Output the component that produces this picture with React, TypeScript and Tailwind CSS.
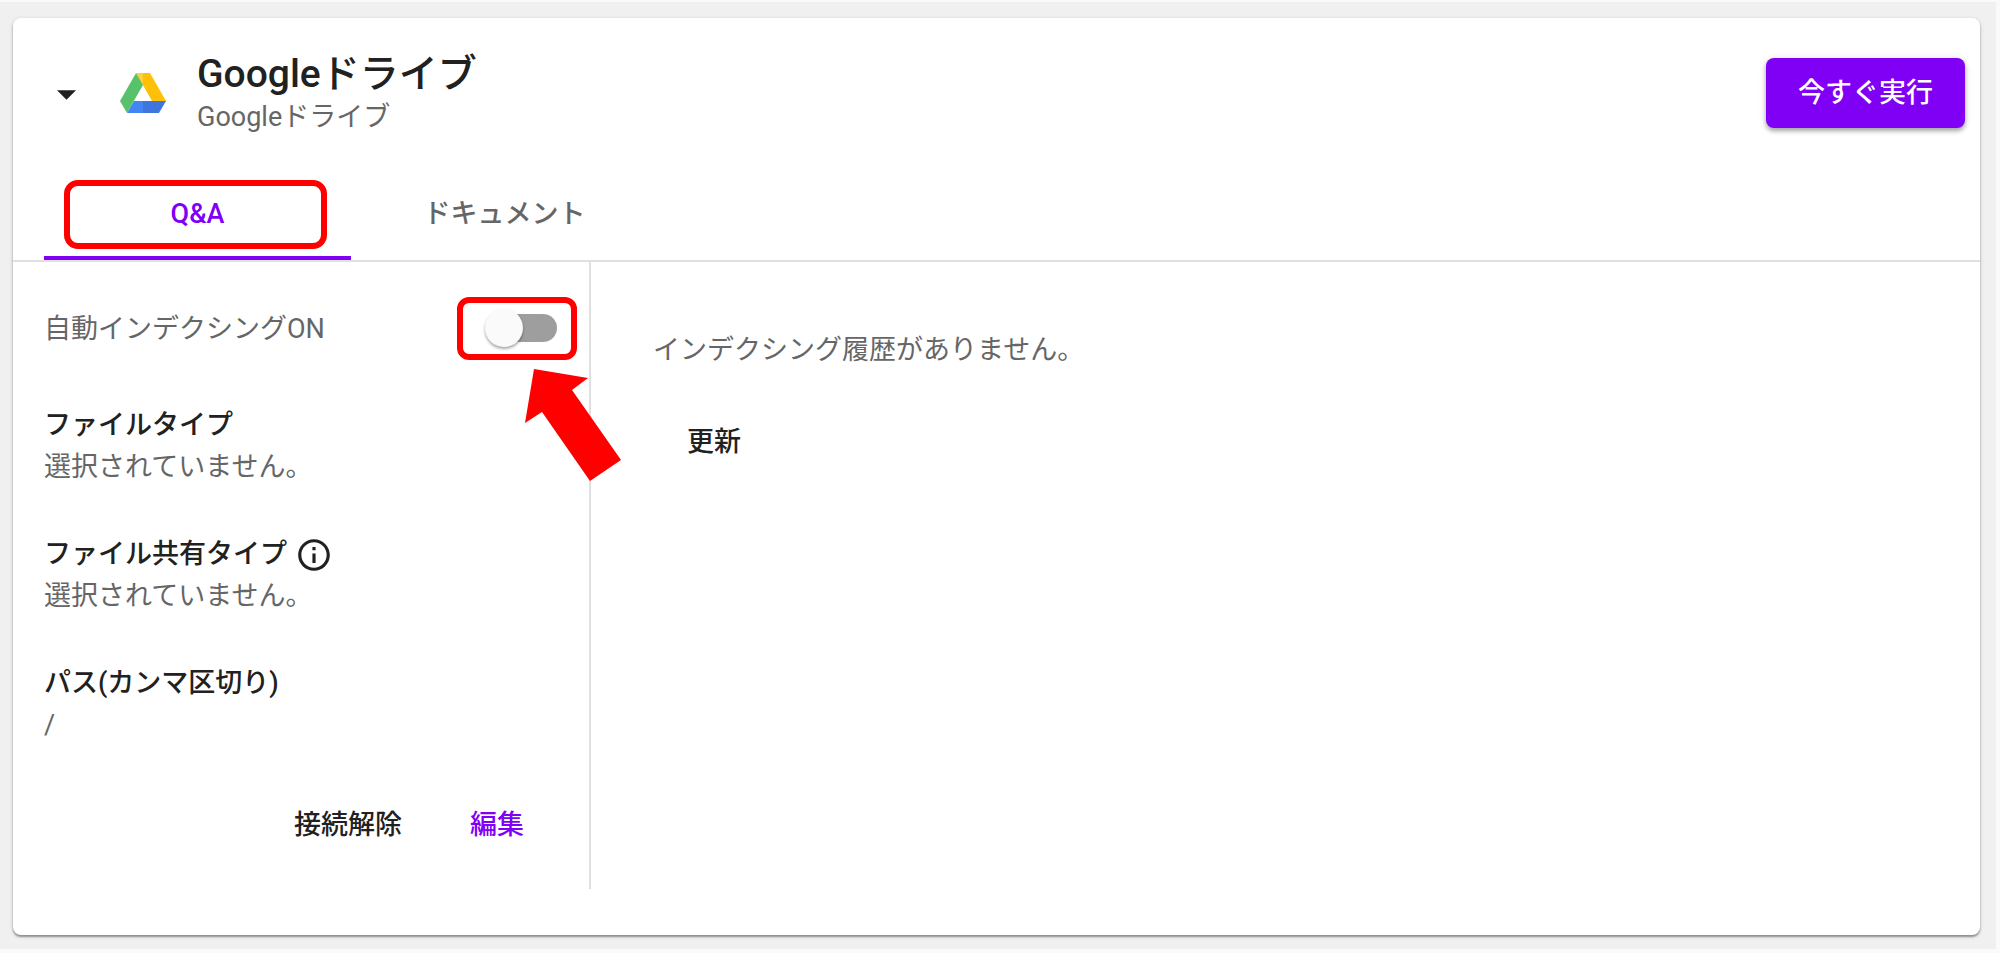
import { useState } from "react";

const fields = [
  { title: "ファイルタイプ", value: "選択されていません。", info: false },
  { title: "ファイル共有タイプ", value: "選択されていません。", info: true },
  { title: "パス(カンマ区切り)", value: "/", info: false },
];

const tabs = ["Q&A", "ドキュメント"];

function DriveLogo() {
  return (
    <svg viewBox="0 0 46 40" className="h-10 w-[46px]" aria-hidden="true">
      <path d="M16 0H30L46 28H32Z" fill="#ffc107" />
      <path d="M16 0H23V12Z" fill="#ffd232" />
      <path d="M16 0L0 28L7 40L23 12Z" fill="#58c26b" />
      <path d="M14 28H23V40H7Z" fill="#4285f4" />
      <path d="M23 28H46L39 40H23Z" fill="#3f76dd" />
    </svg>
  );
}

function InfoIcon() {
  return (
    <svg viewBox="0 0 24 24" className="mt-[2px] h-[38px] w-[38px]" fill="currentColor" aria-hidden="true">
      <path d="M11 7h2v2h-2zm0 4h2v6h-2zm1-9C6.48 2 2 6.48 2 12s4.48 10 10 10 10-4.48 10-10S17.520 2 12 2zm0 18c-4.410 0-8-3.590-8-8s3.590-8 8-8 8 3.590 8 8-3.590 8-8 8z" />
    </svg>
  );
}

function Arrow() {
  return (
    <svg
      viewBox="0 0 96 112"
      className="pointer-events-none absolute top-[72px] left-[68px] z-10 h-28 w-24"
      fill="#ff0000"
      aria-hidden="true"
    >
      <path d="M9 0L63 9L47 21L96 91L65 112L17 43L0 54Z" />
    </svg>
  );
}

export default function App() {
  const [active, setActive] = useState(0);
  const [indexing, setIndexing] = useState(false);

  return (
    <div className="bg-[#fafafa] pt-[2px] pr-1 pb-1 font-[Roboto,'Noto_Sans_CJK_JP',sans-serif] text-[27px] leading-[42px] text-[#666666]">
      <main className="bg-[#f0f0f0] pt-4 pr-4 pb-[14px] pl-[13px]">
        <section className="rounded-[8px] bg-white pb-[46px] shadow-[0_2px_2px_rgba(0,0,0,0.35),0_1px_4px_rgba(0,0,0,0.15)]">
          <header className="flex items-center py-[31px] pr-[15px] pl-[35px]">
            <button type="button" aria-label="折りたたむ" className="flex h-9 w-9 items-center justify-center">
              <svg viewBox="0 0 20 10" className="mt-1 h-[10px] w-[19px]" fill="#212121" aria-hidden="true">
                <path d="M0 0H20L10 10Z" />
              </svg>
            </button>
            <div className="ml-9 flex items-center gap-[31px]">
              <DriveLogo />
              <div className="pt-[2px]">
                <h1 className="text-[39px] leading-[46px] font-medium text-[#212121]">Googleドライブ</h1>
                <p className="leading-10">Googleドライブ</p>
              </div>
            </div>
            <button
              type="button"
              className="ml-auto h-[70px] rounded-[8px] bg-[#7f00f5] px-8 font-medium text-white shadow-[0_3px_4px_rgba(0,0,0,0.3),0_1px_8px_rgba(0,0,0,0.12)]"
            >
              今すぐ実行
            </button>
          </header>

          <div role="tablist" className="flex border-b-2 border-[#e0e0e0] px-[31px]">
            {tabs.map((tab, i) => (
              <button
                key={tab}
                type="button"
                role="tab"
                aria-selected={active === i}
                onClick={() => setActive(i)}
                className={
                  active === i
                    ? "relative h-[92px] w-[307px] border-b-4 border-[#7f00f5] pt-1 font-medium text-[#7f00f5]"
                    : "relative h-[92px] w-[307px] border-b-4 border-transparent pt-1 font-medium"
                }
              >
                {tab}
                {i === 0 && (
                  <span className="pointer-events-none absolute top-3 left-5 h-[69px] w-[263px] rounded-[14px] border-6 border-[#ff0000]" />
                )}
              </button>
            ))}
          </div>

          <div className="flex">
            <div className="w-[578px] shrink-0 border-r-2 border-[#e0e0e0] pt-11 pr-[31px] pb-[29px] pl-[31px]">
              <div className="flex h-11 items-center justify-between">
                <label htmlFor="auto-indexing" className="pt-[2px]">
                  自動インデクシングON
                </label>
                <div className="relative -mr-[19px] flex h-[63px] w-[120px] items-center justify-center">
                  <input
                    id="auto-indexing"
                    type="checkbox"
                    role="switch"
                    checked={indexing}
                    onChange={(e) => setIndexing(e.target.checked)}
                    className="relative ml-[14px] h-7 w-[66px] appearance-none rounded-full bg-[#9e9e9e] before:absolute before:-top-[5px] before:-left-[6px] before:h-[38px] before:w-[38px] before:rounded-full before:bg-[#fafafa] before:shadow-[0_2px_3px_rgba(0,0,0,0.35)] checked:bg-[#bf80fa] checked:before:left-[34px] checked:before:bg-[#7f00f5]"
                  />
                  <span className="pointer-events-none absolute inset-0 rounded-[12px] border-6 border-[#ff0000]" />
                  <Arrow />
                </div>
              </div>

              <dl className="mt-[54px] flex flex-col gap-[45px]">
                {fields.map((f) => (
                  <div key={f.title}>
                    <dt className="flex h-[42px] items-center gap-2 font-medium text-[#212121]">
                      {f.title}
                      {f.info && <InfoIcon />}
                    </dt>
                    <dd>{f.value}</dd>
                  </div>
                ))}
              </dl>

              <div className="mt-11 flex justify-end font-medium">
                <button type="button" className="h-[70px] px-[34px] text-[#212121]">
                  接続解除
                </button>
                <button type="button" className="h-[70px] px-[34px] text-[#7f00f5]">
                  編集
                </button>
              </div>
            </div>

            <div className="grow pt-[67px] pl-[62px]">
              <p>インデクシング履歴がありません。</p>
              <button type="button" className="mt-9 h-[70px] px-[34px] font-medium text-[#212121]">
                更新
              </button>
            </div>
          </div>
        </section>
      </main>
    </div>
  );
}
